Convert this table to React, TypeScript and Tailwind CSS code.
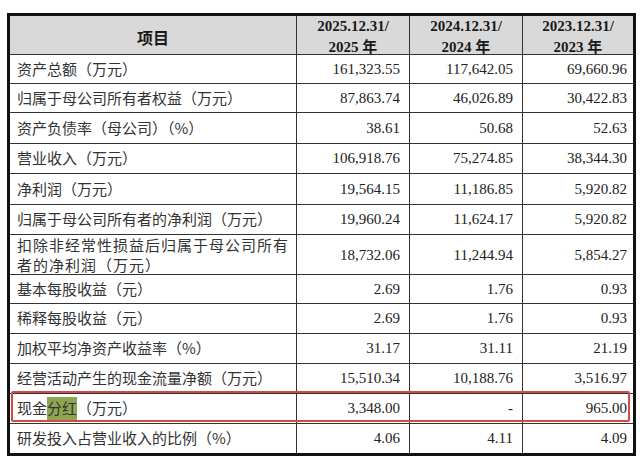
import React from 'react';

type Row = {
  label: React.ReactNode;
  values: [string, string, string];
  h: string;
  highlight?: boolean;
};

const rows: Row[] = [
  { label: '资产总额（万元）', values: ['161,323.55', '117,642.05', '69,660.96'], h: 'h-[29px]' },
  { label: '归属于母公司所有者权益（万元）', values: ['87,863.74', '46,026.89', '30,422.83'], h: 'h-[29px]' },
  { label: '资产负债率（母公司）（%）', values: ['38.61', '50.68', '52.63'], h: 'h-[31px]' },
  { label: '营业收入（万元）', values: ['106,918.76', '75,274.85', '38,344.30'], h: 'h-[30px]' },
  { label: '净利润（万元）', values: ['19,564.15', '11,186.85', '5,920.82'], h: 'h-[31px]' },
  { label: '归属于母公司所有者的净利润（万元）', values: ['19,960.24', '11,624.17', '5,920.82'], h: 'h-[30px]' },
  {
    label: (
      <span className="block leading-[20px] tracking-[1px]">
        扣除非经常性损益后归属于母公司所有
        <br />
        者的净利润（万元）
      </span>
    ),
    values: ['18,732.06', '11,244.94', '5,854.27'],
    h: 'h-[40px]',
  },
  { label: '基本每股收益（元）', values: ['2.69', '1.76', '0.93'], h: 'h-[29px]' },
  { label: '稀释每股收益（元）', values: ['2.69', '1.76', '0.93'], h: 'h-[30px]' },
  { label: '加权平均净资产收益率（%）', values: ['31.17', '31.11', '21.19'], h: 'h-[30px]' },
  { label: '经营活动产生的现金流量净额（万元）', values: ['15,510.34', '10,188.76', '3,516.97'], h: 'h-[30px]' },
  {
    label: (
      <>
        现金<span className="bg-[#8ea552]">分红</span>（万元）
      </>
    ),
    values: ['3,348.00', '-', '965.00'],
    h: 'h-[30px]',
    highlight: true,
  },
  { label: '研发投入占营业收入的比例（%）', values: ['4.06', '4.11', '4.09'], h: 'h-[29px]' },
];

const cjk = "font-['Noto_Sans_CJK_SC',sans-serif]";
const serif = "font-['Liberation_Serif','Noto_Sans_CJK_SC',serif]";

function HeaderDate({ year, last }: { year: string; last?: boolean }) {
  return (
    <div
      className={`flex flex-col items-center justify-center ${last ? '' : 'border-r border-[#333]'} ${serif} text-[15px] font-bold leading-[20px] text-[#1a1a1a]`}
    >
      <span>{year}.12.31/</span>
      <span>
        {year} <span className={cjk}>年</span>
      </span>
    </div>
  );
}

export default function App() {
  return (
    <div className="w-[640px] h-[459px] bg-white overflow-hidden pt-[13px] pl-[7px]">
      <div className="w-[629px] border-[3px] border-[#111]">
        {/* header */}
        <div className="grid grid-cols-[287px_113px_113px_110px] h-[39px] bg-[#d9d9d9] border-b border-[#333]">
          <div className={`flex items-center justify-center border-r border-[#333] ${cjk} text-[16px] font-bold text-[#1a1a1a]`}>
            项目
          </div>
          <HeaderDate year="2025" />
          <HeaderDate year="2024" />
          <HeaderDate year="2023" last />
        </div>

        {rows.map((row, i) => (
          <div
            key={i}
            className={`relative grid grid-cols-[287px_113px_113px_110px] ${row.h} ${i < rows.length - 1 ? 'border-b border-[#333]' : ''}`}
          >
            <div className={`flex items-center pl-[7px] border-r border-[#333] ${cjk} text-[15px] text-[#333] whitespace-nowrap`}>
              {row.label}
            </div>
            {row.values.map((v, j) => (
              <div
                key={j}
                className={`flex items-center justify-end ${j < 2 ? 'pr-[9px] border-r border-[#333]' : 'pr-[6px]'} ${serif} text-[15px] text-[#222]`}
              >
                {v}
              </div>
            ))}
            {row.highlight && (
              <div className="pointer-events-none absolute -top-[3px] left-[1px] right-[3px] bottom-[1px] border-2 border-[#d24a45] rounded-[2px]" />
            )}
          </div>
        ))}
      </div>
    </div>
  );
}
